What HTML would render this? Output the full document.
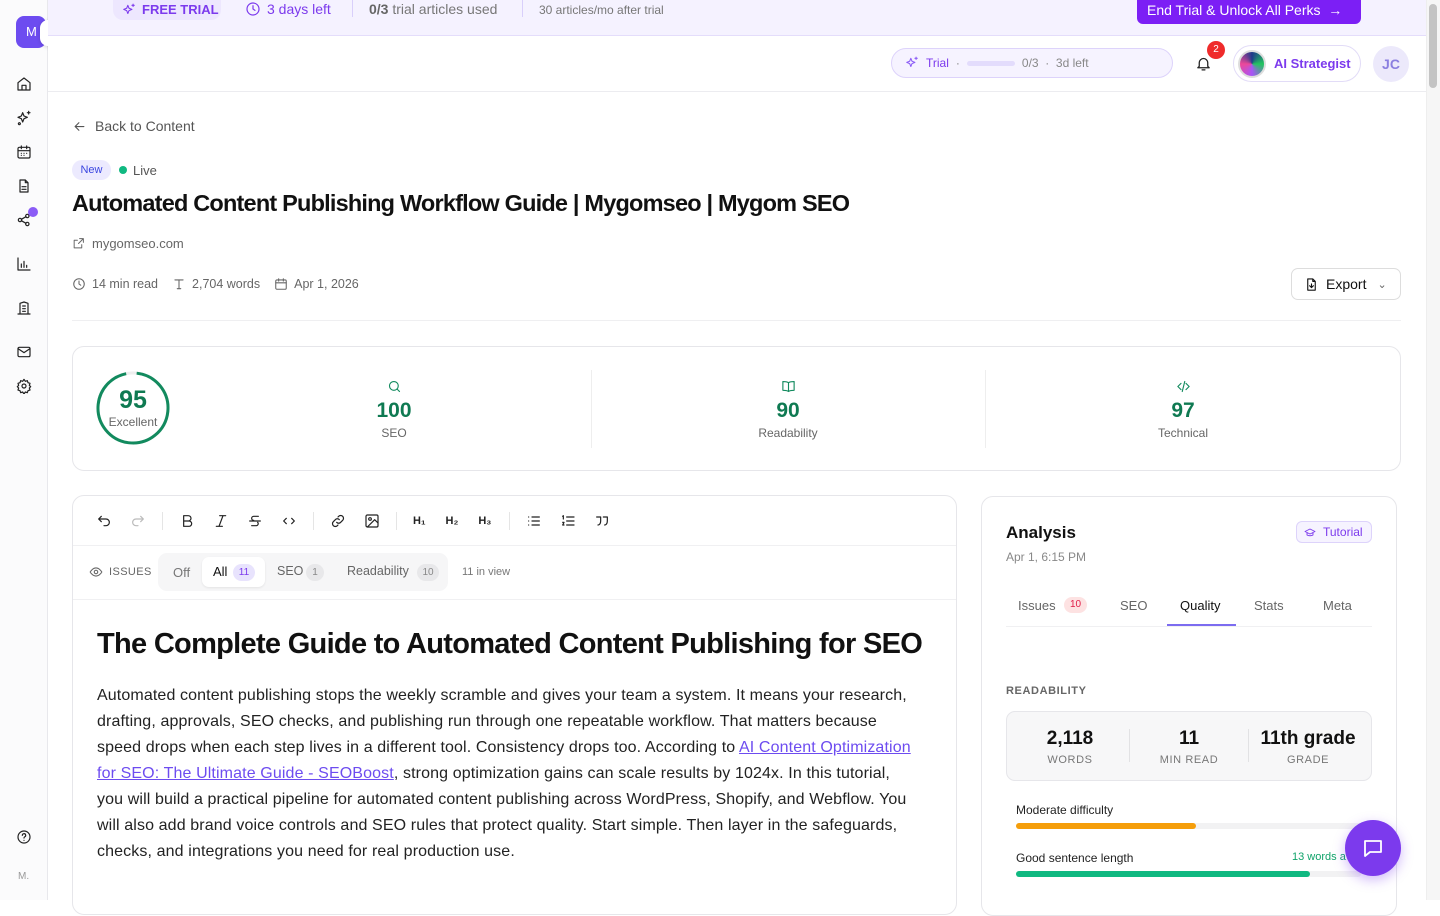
<!DOCTYPE html>
<html><head><meta charset="utf-8"><style>
*{box-sizing:border-box;margin:0;padding:0}
body{width:1440px;height:900px;overflow:hidden;font-family:"Liberation Sans",sans-serif;background:#fff;color:#111;position:relative}
.abs{position:absolute}
svg{display:block}
.ic{fill:none;stroke:currentColor;stroke-width:1.8;stroke-linecap:round;stroke-linejoin:round}
.sb{left:0;top:0;width:48px;height:900px;border-right:1px solid #e8e8ec;background:#fbfbfc}
.banner{left:48px;top:0;width:1378px;height:36px;background:#f5f2ff;border-bottom:1px solid #e4ddfb}
.hdr{left:48px;top:36px;width:1378px;height:56px;border-bottom:1px solid #ececf0;background:#fff}
</style></head><body>
<div class="abs sb"></div>
<div class="abs" style="left:16px;top:16px;width:30px;height:32px;background:#6d4cf0;border-radius:8px;color:#fff;font-size:13px;line-height:32px;padding-left:10px">M</div>
<div class="abs" style="left:40px;top:20px;width:28px;height:26px;background:#fff;border-radius:8px;box-shadow:0 1px 4px rgba(0,0,0,.15);color:#888;text-align:center;line-height:26px;font-size:14px">‹</div>
<div class="abs" style="left:16px;top:76px;color:#222">
<svg width="16" height="16" viewBox="0 0 24 24" class="ic"><path d="M3 10l9-7 9 7v11H3z M9 21v-7h6v7"/></svg>
<svg style="margin-top:18px" width="16" height="16" viewBox="0 0 24 24" class="ic"><path d="M10 4l2 5 5 2-5 2-2 5-2-5-5-2 5-2z M19 2v4 M17 4h4 M5 19a1.5 1.5 0 1 0 .1 0"/></svg>
<svg style="margin-top:18px" width="16" height="16" viewBox="0 0 24 24" class="ic"><rect x="3" y="5" width="18" height="16" rx="2"/><path d="M3 10h18M8 3v4M16 3v4M8 14h.01M12 14h.01M16 14h.01M8 17h.01M12 17h.01"/></svg>
<svg style="margin-top:18px" width="16" height="16" viewBox="0 0 24 24" class="ic"><path d="M14 3H6v18h12V7z M14 3v4h4 M9 13h6M9 17h6"/></svg>
<svg style="margin-top:18px" width="16" height="16" viewBox="0 0 24 24" class="ic"><circle cx="6" cy="12" r="2.5"/><circle cx="17" cy="6" r="2.5"/><circle cx="17" cy="18" r="2.5"/><path d="M8 11l7-4M8 13l7 4"/></svg>
<svg style="margin-top:28px" width="16" height="16" viewBox="0 0 24 24" class="ic"><path d="M3 3v18h18M8 17v-5M12 17V8M16 17v-3"/></svg>
<svg style="margin-top:28px" width="16" height="16" viewBox="0 0 24 24" class="ic"><path d="M6 21V5l6-2 6 2v16z M3 21h18M10 9h4M10 13h4M10 17h4"/></svg>
<svg style="margin-top:28px" width="16" height="16" viewBox="0 0 24 24" class="ic"><rect x="3" y="5" width="18" height="14" rx="2"/><path d="M3 7l9 6 9-6"/></svg>
<svg style="margin-top:18px" width="16" height="16" viewBox="0 0 24 24" class="ic"><circle cx="12" cy="12" r="3"/><path d="M12 2l2 3 3-1 1 3 3 1-1 3 2 2-2 2 1 3-3 1-1 3-3-1-2 3-2-3-3 1-1-3-3-1 1-3-2-2 2-2-1-3 3-1 1-3 3 1z"/></svg>
</div>
<div class="abs" style="left:28px;top:207px;width:10px;height:10px;border-radius:50%;background:#8b5cf6"></div>
<div class="abs" style="left:16px;top:829px;color:#222"><svg width="16" height="16" viewBox="0 0 24 24" class="ic"><circle cx="12" cy="12" r="9"/><path d="M9.5 9.5a2.5 2.5 0 1 1 3.5 2.3c-.7.4-1 .9-1 1.7M12 17h.01"/></svg></div>
<div class="abs" style="left:18px;top:871px;font-size:10px;color:#999">M.</div>

<div class="abs banner"></div>
<div class="abs" style="left:113px;top:0;height:20px;width:108px;background:#ede7fe;border-radius:0 0 10px 10px"></div>
<div class="abs" style="left:122px;top:2px;font-size:13px;font-weight:bold;color:#7c3aed;display:flex;align-items:center;gap:6px"><svg width="14" height="14" viewBox="0 0 24 24" class="ic"><path d="M10 4l2 5 5 2-5 2-2 5-2-5-5-2 5-2z M19 2v4M17 4h4"/></svg>FREE TRIAL</div>
<div class="abs" style="left:245px;top:1px;font-size:14px;color:#7c3aed;display:flex;align-items:center;gap:6px"><svg width="16" height="16" viewBox="0 0 24 24" class="ic"><circle cx="12" cy="12" r="9"/><path d="M12 7v5l3 2"/></svg>3 days left</div>
<div class="abs" style="left:352px;top:0;width:1px;height:17px;background:#d9cffb"></div>
<div class="abs" style="left:369px;top:1px;font-size:14px;color:#777"><b style="color:#666">0/3</b> trial articles used</div>
<div class="abs" style="left:522px;top:0;width:1px;height:17px;background:#d9cffb"></div>
<div class="abs" style="left:539px;top:3px;font-size:12px;color:#777">30 articles/mo after trial</div>
<div class="abs" style="left:1137px;top:0;width:224px;height:24px;background:#7c1ff5;border-radius:0 0 6px 6px;color:#fff;font-size:14px;line-height:20px;padding-left:10px">End Trial &amp; Unlock All Perks &nbsp;→</div>
<div class="abs" style="left:1426px;top:0;width:14px;height:900px;background:#f6f6f6;border-left:1px solid #eee"></div>
<div class="abs" style="left:1429px;top:4px;width:8px;height:84px;background:#c4c4c4;border-radius:4px"></div>

<div class="abs hdr"></div>
<div class="abs" style="left:891px;top:48px;width:282px;height:30px;border:1px solid #ddd3fb;background:#f6f3ff;border-radius:15px;font-size:12px;display:flex;align-items:center;padding-left:13px;gap:7px;color:#888">
<svg width="14" height="14" viewBox="0 0 24 24" class="ic" style="color:#8b5cf6"><path d="M10 4l2 5 5 2-5 2-2 5-2-5-5-2 5-2z M19 2v4M17 4h4"/></svg><span style="color:#7c3aed">Trial</span>·<span style="width:48px;height:5px;background:#e3dcfc;border-radius:3px;display:inline-block"></span>0/3 &nbsp;· &nbsp;3d left</div>
<div class="abs" style="left:1195px;top:55px;color:#222"><svg width="17" height="17" viewBox="0 0 24 24" class="ic"><path d="M6 16V11a6 6 0 0 1 12 0v5l2 2H4z M10 21h4"/></svg></div>
<div class="abs" style="left:1207px;top:41px;width:18px;height:18px;border-radius:50%;background:#ef2b2b;color:#fff;font-size:10px;text-align:center;line-height:18px">2</div>
<div class="abs" style="left:1233px;top:45px;width:128px;height:37px;border:1px solid #e2dcf7;border-radius:19px;display:flex;align-items:center;padding-left:4px;gap:8px;font-size:13px;font-weight:bold;color:#7c3aed"><span style="width:28px;height:28px;border-radius:50%;background:conic-gradient(#1e3a8a,#22c55e,#a855f7,#ec4899,#1e3a8a);border:2px solid #ddd"></span>AI Strategist</div>
<div class="abs" style="left:1373px;top:46px;width:36px;height:36px;border-radius:50%;background:#ece9fb;color:#8b7fe0;font-size:14px;font-weight:bold;text-align:center;line-height:36px">JC</div>

<div class="abs" style="left:72px;top:118px;font-size:14px;color:#555;display:flex;gap:8px;align-items:center"><svg width="15" height="15" viewBox="0 0 24 24" class="ic"><path d="M19 12H5M11 6l-6 6 6 6"/></svg>Back to Content</div>
<div class="abs" style="left:72px;top:160px;width:39px;height:20px;background:#eceafe;border-radius:10px;color:#3b46e0;font-size:11px;text-align:center;line-height:20px">New</div>
<div class="abs" style="left:119px;top:166px;width:8px;height:8px;border-radius:50%;background:#10b981"></div>
<div class="abs" style="left:133px;top:163px;font-size:13px;color:#555">Live</div>
<div class="abs" style="left:72px;top:190px;font-size:23.5px;font-weight:bold;letter-spacing:-0.8px;color:#111">Automated Content Publishing Workflow Guide | Mygomseo | Mygom SEO</div>
<div class="abs" style="left:72px;top:236px;font-size:13px;color:#666;display:flex;gap:7px;align-items:center"><svg width="13" height="13" viewBox="0 0 24 24" class="ic"><path d="M14 3h7v7M21 3l-9 9M18 14v6H4V6h6"/></svg>mygomseo.com</div>
<div class="abs" style="left:72px;top:277px;font-size:12.5px;color:#666;display:flex;gap:6px;align-items:center">
<svg width="14" height="14" viewBox="0 0 24 24" class="ic"><circle cx="12" cy="12" r="9"/><path d="M12 7v5l3 2"/></svg>14 min read<span style="width:2px"></span>
<svg width="14" height="14" viewBox="0 0 24 24" class="ic"><path d="M5 5h14M12 5v15M9 20h6"/></svg>2,704 words<span style="width:2px"></span>
<svg width="14" height="14" viewBox="0 0 24 24" class="ic"><rect x="3" y="5" width="18" height="16" rx="2"/><path d="M3 10h18M8 3v4M16 3v4"/></svg>Apr 1, 2026</div>
<div class="abs" style="left:1291px;top:268px;width:110px;height:32px;border:1px solid #ddd;border-radius:7px;font-size:14px;display:flex;align-items:center;padding-left:12px;gap:7px;color:#111"><svg width="15" height="15" viewBox="0 0 24 24" class="ic"><path d="M14 3H6v18h12V7z M14 3v4h4 M12 11v6M9 14l3 3 3-3"/></svg>Export <span style="color:#666;font-size:11px;margin-left:4px">⌄</span></div>
<div class="abs" style="left:72px;top:320px;width:1329px;height:1px;background:#efeff1"></div>

<div class="abs" style="left:72px;top:346px;width:1329px;height:125px;border:1px solid #e6e6ea;border-radius:12px"></div>
<svg class="abs" style="left:96px;top:371px" width="74" height="74" viewBox="0 0 74 74"><circle cx="37" cy="37" r="35" fill="none" stroke="#eee" stroke-width="3"/><circle cx="37" cy="37" r="35" fill="none" stroke="#128a5e" stroke-width="3" stroke-dasharray="209 220" transform="rotate(-84 37 37)"/></svg>
<div class="abs" style="left:96px;top:386px;width:74px;text-align:center;font-size:25px;font-weight:bold;color:#0f7a52">95</div>
<div class="abs" style="left:96px;top:415px;width:74px;text-align:center;font-size:12px;color:#666">Excellent</div>
<div class="abs" style="left:591px;top:370px;width:1px;height:78px;background:#eee"></div>
<div class="abs" style="left:985px;top:370px;width:1px;height:78px;background:#eee"></div>
<div class="abs" style="left:294px;top:379px;width:200px;text-align:center;color:#128a5e"><svg style="margin:0 auto" width="15" height="15" viewBox="0 0 24 24" class="ic"><circle cx="11" cy="11" r="7"/><path d="M20 20l-4-4"/></svg><div style="font-size:21px;font-weight:bold;color:#0f7a52;margin-top:5px">100</div><div style="font-size:12px;color:#666;margin-top:3px">SEO</div></div>
<div class="abs" style="left:688px;top:379px;width:200px;text-align:center;color:#128a5e"><svg style="margin:0 auto" width="15" height="15" viewBox="0 0 24 24" class="ic"><path d="M12 6c-2-2-5-2-9-2v14c4 0 7 0 9 2 2-2 5-2 9-2V4c-4 0-7 0-9 2zM12 6v14"/></svg><div style="font-size:21px;font-weight:bold;color:#0f7a52;margin-top:5px">90</div><div style="font-size:12px;color:#666;margin-top:3px">Readability</div></div>
<div class="abs" style="left:1083px;top:379px;width:200px;text-align:center;color:#128a5e"><svg style="margin:0 auto" width="15" height="15" viewBox="0 0 24 24" class="ic"><path d="M8 7l-5 5 5 5M16 7l5 5-5 5M14 4l-4 16"/></svg><div style="font-size:21px;font-weight:bold;color:#0f7a52;margin-top:5px">97</div><div style="font-size:12px;color:#666;margin-top:3px">Technical</div></div>

<div class="abs" style="left:72px;top:495px;width:885px;height:420px;border:1px solid #e6e6ea;border-radius:12px"></div>
<div class="abs" style="left:73px;top:545px;width:883px;height:1px;background:#f0f0f2"></div>
<div class="abs" style="left:73px;top:599px;width:883px;height:1px;background:#f0f0f2"></div>
<div class="abs" style="left:96px;top:512px;display:flex;align-items:center;color:#222;font-size:11px;font-weight:bold">
<svg width="16" height="16" viewBox="0 0 24 24" class="ic"><path d="M4 9h11a5 5 0 0 1 0 10h-3M4 9l4-4M4 9l4 4"/></svg>
<svg style="margin-left:18px;color:#bbb" width="16" height="16" viewBox="0 0 24 24" class="ic"><path d="M20 9H9a5 5 0 0 0 0 10h3M20 9l-4-4M20 9l-4 4"/></svg>
<span style="width:1px;height:18px;background:#e5e5e5;margin:0 16px"></span>
<svg width="16" height="16" viewBox="0 0 24 24" class="ic"><path d="M7 4h7a4 4 0 0 1 0 8H7zM7 12h8a4 4 0 0 1 0 8H7z"/></svg>
<svg style="margin-left:18px" width="16" height="16" viewBox="0 0 24 24" class="ic"><path d="M10 4h9M5 20h9M15 4L9 20"/></svg>
<svg style="margin-left:18px" width="16" height="16" viewBox="0 0 24 24" class="ic"><path d="M4 12h16M17 5H10a3 3 0 0 0 0 6M7 19h7a3 3 0 0 0 2-5"/></svg>
<svg style="margin-left:18px" width="16" height="16" viewBox="0 0 24 24" class="ic"><path d="M8 8l-4 4 4 4M16 8l4 4-4 4"/></svg>
<span style="width:1px;height:18px;background:#e5e5e5;margin:0 16px"></span>
<svg width="16" height="16" viewBox="0 0 24 24" class="ic"><path d="M10 14a4 4 0 0 0 6 0l3-3a4 4 0 0 0-6-6l-1 1M14 10a4 4 0 0 0-6 0l-3 3a4 4 0 0 0 6 6l1-1"/></svg>
<svg style="margin-left:18px" width="16" height="16" viewBox="0 0 24 24" class="ic"><rect x="3" y="3" width="18" height="18" rx="2"/><circle cx="9" cy="9" r="2"/><path d="M21 15l-5-5L5 21"/></svg>
<span style="width:1px;height:18px;background:#e5e5e5;margin:0 16px"></span>
<span>H₁</span><span style="margin-left:20px">H₂</span><span style="margin-left:20px">H₃</span>
<span style="width:1px;height:18px;background:#e5e5e5;margin:0 16px 0 18px"></span>
<svg width="16" height="16" viewBox="0 0 24 24" class="ic"><path d="M9 6h11M9 12h11M9 18h11M4 6h.01M4 12h.01M4 18h.01"/></svg>
<svg style="margin-left:18px" width="16" height="16" viewBox="0 0 24 24" class="ic"><path d="M10 6h11M10 12h11M10 18h11M4 5l1-1v5M4 14h2l-2 4h2"/></svg>
<svg style="margin-left:18px" width="16" height="16" viewBox="0 0 24 24" class="ic"><path d="M4 6h6v6c0 4-2 6-4 6M14 6h6v6c0 4-2 6-4 6"/></svg>
</div>
<div class="abs" style="left:89px;top:565px;font-size:11px;color:#666;display:flex;gap:6px;align-items:center;letter-spacing:.4px"><svg width="14" height="14" viewBox="0 0 24 24" class="ic"><path d="M2 12s4-7 10-7 10 7 10 7-4 7-10 7S2 12 2 12z"/><circle cx="12" cy="12" r="3"/></svg>ISSUES</div>
<div class="abs" style="left:158px;top:553px;width:290px;height:38px;background:#f6f6f7;border-radius:9px"></div>
<div class="abs" style="left:173px;top:565px;font-size:13px;color:#777">Off</div>
<div class="abs" style="left:202px;top:557px;width:63px;height:30px;background:#fff;border-radius:7px;box-shadow:0 1px 2px rgba(0,0,0,.08)"></div>
<div class="abs" style="left:213px;top:564px;font-size:13px;color:#111">All</div>
<div class="abs" style="left:233px;top:564px;width:22px;height:17px;border-radius:9px;background:#e8e3fd;color:#7c3aed;font-size:10px;text-align:center;line-height:17px">11</div>
<div class="abs" style="left:277px;top:564px;font-size:12.5px;color:#666">SEO</div>
<div class="abs" style="left:306px;top:564px;width:18px;height:17px;border-radius:9px;background:#e8e8ea;color:#888;font-size:10px;text-align:center;line-height:17px">1</div>
<div class="abs" style="left:347px;top:564px;font-size:12.5px;color:#666">Readability</div>
<div class="abs" style="left:417px;top:564px;width:22px;height:17px;border-radius:9px;background:#e8e8ea;color:#888;font-size:10px;text-align:center;line-height:17px">10</div>
<div class="abs" style="left:462px;top:566px;font-size:11px;color:#777">11 in view</div>
<div class="abs" style="left:97px;top:628px;font-size:29px;font-weight:bold;letter-spacing:-0.7px;color:#111">The Complete Guide to Automated Content Publishing for SEO</div>
<div class="abs" style="left:97px;top:683px;width:815px;font-size:16px;letter-spacing:0.12px;line-height:26px;color:#222">Automated content publishing stops the weekly scramble and gives your team a system. It means your research, drafting, approvals, SEO checks, and publishing run through one repeatable workflow. That matters because speed drops when each step lives in a different tool. Consistency drops too. According to <span style="color:#6d4cf0;text-decoration:underline">AI Content Optimization for SEO: The Ultimate Guide - SEOBoost</span>, strong optimization gains can scale results by 1024x. In this tutorial, you will build a practical pipeline for automated content publishing across WordPress, Shopify, and Webflow. You will also add brand voice controls and SEO rules that protect quality. Start simple. Then layer in the safeguards, checks, and integrations you need for real production use.</div>

<div class="abs" style="left:981px;top:496px;width:416px;height:420px;border:1px solid #e6e6ea;border-radius:12px"></div>
<div class="abs" style="left:1006px;top:523px;font-size:17px;font-weight:bold;color:#111">Analysis</div>
<div class="abs" style="left:1006px;top:550px;font-size:12px;color:#888">Apr 1, 6:15 PM</div>
<div class="abs" style="left:1296px;top:521px;width:76px;height:22px;border:1px solid #ddd3fb;background:#f6f3ff;border-radius:6px;font-size:12px;color:#7c3aed;line-height:20px;padding-left:26px">Tutorial</div>
<div class="abs" style="left:1304px;top:527px;color:#7c3aed"><svg width="12" height="12" viewBox="0 0 24 24" class="ic"><path d="M2 9l10-5 10 5-10 5zM6 11v5c3 2 9 2 12 0v-5"/></svg></div>
<div class="abs" style="left:1006px;top:626px;width:366px;height:1px;background:#f0f0f2"></div>
<div class="abs" style="left:1018px;top:598px;font-size:13px;color:#666">Issues</div>
<div class="abs" style="left:1064px;top:597px;width:23px;height:16px;border-radius:8px;background:#fde2e2;color:#e11d48;font-size:10px;text-align:center;line-height:16px">10</div>
<div class="abs" style="left:1120px;top:598px;font-size:13px;color:#666">SEO</div>
<div class="abs" style="left:1180px;top:598px;font-size:13px;color:#111">Quality</div>
<div class="abs" style="left:1167px;top:624px;width:69px;height:2px;background:#7c6cf0"></div>
<div class="abs" style="left:1254px;top:598px;font-size:13px;color:#666">Stats</div>
<div class="abs" style="left:1323px;top:598px;font-size:13px;color:#666">Meta</div>
<div class="abs" style="left:1006px;top:685px;font-size:11px;color:#666;letter-spacing:.6px;font-weight:bold">READABILITY</div>
<div class="abs" style="left:1006px;top:711px;width:366px;height:70px;background:#f7f7f8;border:1px solid #e6e6ea;border-radius:9px"></div>
<div class="abs" style="left:1129px;top:729px;width:1px;height:33px;background:#e2e2e4"></div>
<div class="abs" style="left:1248px;top:729px;width:1px;height:33px;background:#e2e2e4"></div>
<div class="abs" style="left:1010px;top:728px;width:120px;text-align:center;font-size:19px;font-weight:bold;color:#111">2,118</div>
<div class="abs" style="left:1010px;top:754px;width:120px;text-align:center;font-size:11px;color:#777;letter-spacing:.6px">WORDS</div>
<div class="abs" style="left:1129px;top:728px;width:120px;text-align:center;font-size:19px;font-weight:bold;color:#111">11</div>
<div class="abs" style="left:1129px;top:754px;width:120px;text-align:center;font-size:11px;color:#777;letter-spacing:.6px">MIN READ</div>
<div class="abs" style="left:1248px;top:728px;width:120px;text-align:center;font-size:19px;font-weight:bold;color:#111">11th grade</div>
<div class="abs" style="left:1248px;top:754px;width:120px;text-align:center;font-size:11px;color:#777;letter-spacing:.6px">GRADE</div>
<div class="abs" style="left:1016px;top:803px;font-size:12px;color:#222">Moderate difficulty</div>
<div class="abs" style="left:1016px;top:823px;width:345px;height:6px;background:#f2f2f3;border-radius:3px"></div>
<div class="abs" style="left:1016px;top:823px;width:180px;height:6px;background:#f59e0b;border-radius:3px"></div>
<div class="abs" style="left:1016px;top:851px;font-size:12px;color:#222">Good sentence length</div>
<div class="abs" style="left:1292px;top:851px;font-size:11px;color:#10a36a">13 words avg</div>
<div class="abs" style="left:1016px;top:871px;width:345px;height:6px;background:#f2f2f3;border-radius:3px"></div>
<div class="abs" style="left:1016px;top:871px;width:294px;height:6px;background:#10b981;border-radius:3px"></div>
<div class="abs" style="left:1345px;top:820px;width:56px;height:56px;border-radius:50%;background:#7c3aed;box-shadow:0 4px 12px rgba(124,58,237,.35);display:flex;align-items:center;justify-content:center;color:#fff"><svg width="24" height="24" viewBox="0 0 24 24" class="ic"><path d="M4 5h16v11H9l-5 4z"/></svg></div>
</body></html>
